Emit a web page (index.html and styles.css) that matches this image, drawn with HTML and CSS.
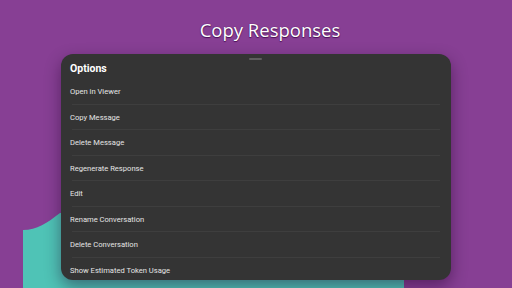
FILE: index.html
```html
<!DOCTYPE html>
<html lang="en">
<head>
    <meta charset="UTF-8">
    <meta name="viewport" content="width=device-width, initial-scale=1.0">
    <title>Copy Responses</title>
    <link rel="stylesheet" href="styles.css">
</head>
<body>
    <div class="screen">
        <h1 class="headline">Copy Responses</h1>

        <div class="stage">
            <!-- teal blob peeking out behind the sheet -->
            <svg class="blob" width="381" height="75" viewBox="0 0 381 75">
                <path d="M0 17 C14 17 24 10 37 0 L381 0 L381 75 L0 75 Z" fill="#4fc3b6"/>
            </svg>

            <div class="sheet">
                <div class="handle"></div>
                <div class="sheet-title">Options</div>
                <ul class="menu">
                    <li>Open in Viewer</li>
                    <li>Copy Message</li>
                    <li>Delete Message</li>
                    <li>Regenerate Response</li>
                    <li>Edit</li>
                    <li>Rename Conversation</li>
                    <li>Delete Conversation</li>
                    <li>Show Estimated Token Usage</li>
                </ul>
            </div>
        </div>
    </div>
</body>
</html>
```

FILE: styles.css
```css
:root {
    --purple: #873f94;
    --sheet: #343434;
    --text: #e4e4e4;
    --divider: #3e3e3e;
}

* {
    margin: 0;
    padding: 0;
    box-sizing: border-box;
}

body {
    background-color: var(--purple);
    font-family: Roboto, "Noto Sans", sans-serif;
    overflow: hidden;
}

.screen {
    width: 512px;
    height: 288px;
    display: flex;
    flex-direction: column;
}

.headline {
    font-family: "Open Sans", sans-serif;
    font-weight: 400;
    font-size: 18.5px;
    color: #fff;
    text-align: center;
    padding-left: 28px;
    height: 54px;
    line-height: 60px;
    text-shadow: 0 0 1px #4a1256, 0 1px 1px #4a1256;
}

.stage {
    position: relative;
    flex: 1;
}

.blob {
    position: absolute;
    left: 23px;
    top: 159px;
}

.sheet {
    position: relative;
    margin-left: 61px;
    width: 390px;
    height: 226px;
    background-color: var(--sheet);
    border-radius: 12px;
    overflow: hidden;
    box-shadow: 0 6px 16px rgba(30, 0, 40, 0.45);
}

.handle {
    position: absolute;
    left: 188px;
    top: 4px;
    width: 13px;
    height: 2px;
    border-radius: 1px;
    background-color: #5e5e5e;
}

.sheet-title {
    height: 25px;
    padding: 8px 0 0 9px;
    font-size: 10.5px;
    font-weight: 700;
    color: #fff;
}

.menu {
    list-style: none;
}

.menu li {
    height: 25.5px;
    line-height: 26px;
    padding-left: 9px;
    font-size: 7.6px;
    color: var(--text);
    position: relative;
}

.menu li::after {
    content: "";
    position: absolute;
    left: 11px;
    right: 11px;
    bottom: 0;
    height: 1px;
    background-color: var(--divider);
}
```
